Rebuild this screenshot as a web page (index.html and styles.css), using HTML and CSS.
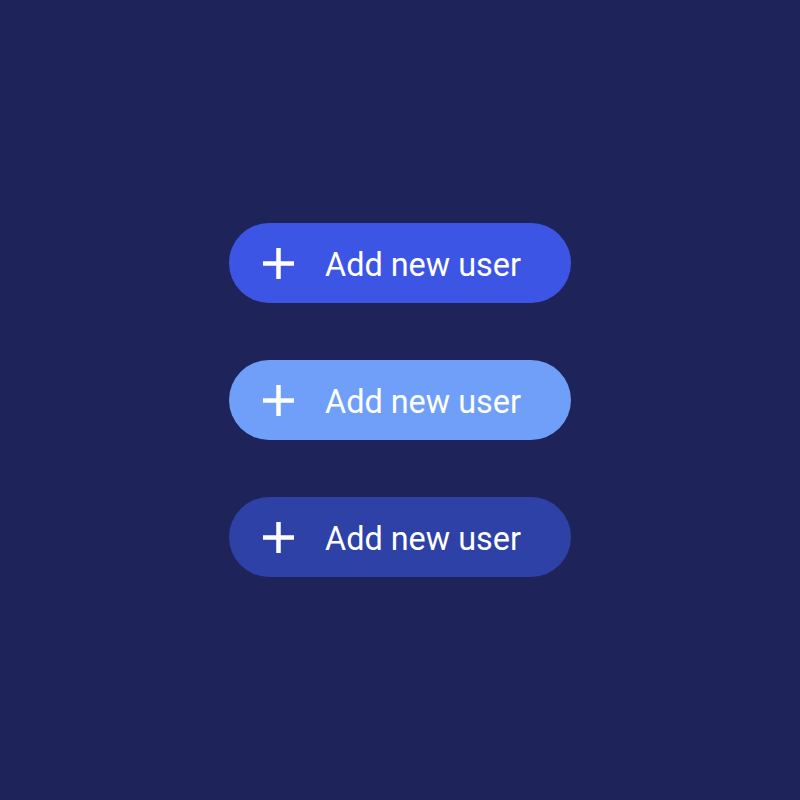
FILE: index.html
```html
<!DOCTYPE html>
<html lang="en">
<head>
    <meta charset="UTF-8">
    <meta name="viewport" content="width=device-width, initial-scale=1.0">
    <title>Add user buttons</title>
    <link rel="stylesheet" href="styles.css">
</head>
<body>
    <div class="stack">
        <button class="add-btn primary">
            <svg class="plus" viewBox="0 0 31 31"><path d="M15.5 0v31M0 15.5h31"/></svg>
            <span class="label">Add new user</span>
        </button>
        <button class="add-btn hover">
            <svg class="plus" viewBox="0 0 31 31"><path d="M15.5 0v31M0 15.5h31"/></svg>
            <span class="label">Add new user</span>
        </button>
        <button class="add-btn pressed">
            <svg class="plus" viewBox="0 0 31 31"><path d="M15.5 0v31M0 15.5h31"/></svg>
            <span class="label">Add new user</span>
        </button>
    </div>
</body>
</html>
```

FILE: styles.css
```css
body {
    margin: 0;
    height: 100vh;
    background-color: #1e2459;
    font-family: Roboto, "Noto Sans", sans-serif;
    display: flex;
    justify-content: center;
    align-items: center;
}
.stack {
    display: flex;
    flex-direction: column;
    gap: 57px;
}
.add-btn {
    width: 342px;
    height: 80px;
    padding: 0 0 0 34px;
    border: none;
    border-radius: 40px;
    display: flex;
    align-items: center;
    gap: 31px;
    color: #fff;
    font-family: inherit;
    font-size: 32.4px;
    font-weight: 400;
    cursor: pointer;
}
.label {
    padding-top: 3px;
}
.plus {
    width: 31px;
    height: 31px;
    stroke: #fff;
    stroke-width: 4.5;
    flex-shrink: 0;
}
.add-btn.primary {
    background-color: #3c55e5;
}
.add-btn.hover {
    background-color: #6f9ff8;
}
.add-btn.pressed {
    background-color: #2d41a7;
}
```
